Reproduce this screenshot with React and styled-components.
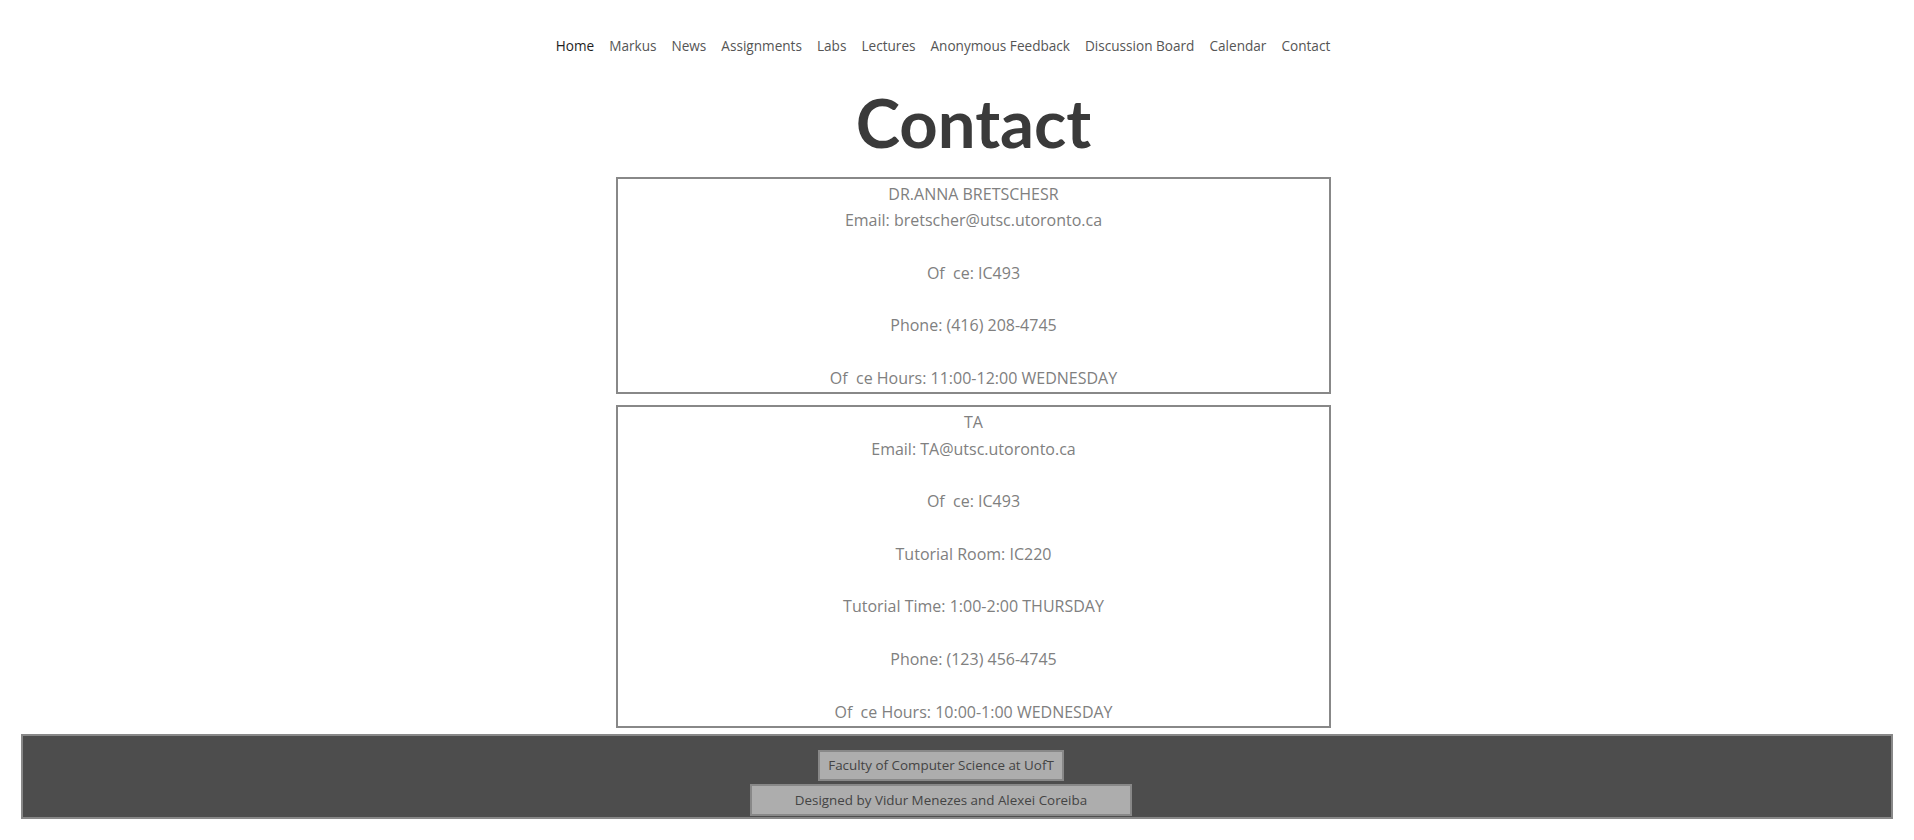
import React from 'react';
import styled, { createGlobalStyle } from 'styled-components';

const GlobalStyle = createGlobalStyle`
  html, body {
    margin: 0;
    padding: 0;
    background: #ffffff;
  }
  body {
    font-family: 'Open Sans', 'Liberation Sans', sans-serif;
  }
`;

const Page = styled.div`
  width: 100%;
  min-height: 840px;
  display: flex;
  flex-direction: column;
`;

const Nav = styled.nav`
  display: flex;
  justify-content: center;
  gap: 15px;
  padding: 36px 28px 0 0;
  line-height: 20px;
`;

const NavLink = styled.a`
  font-size: 13.6px;
  color: ${(props) => (props.$active ? '#1e1e1e' : '#555555')};
  text-decoration: none;
  cursor: pointer;
`;

const Main = styled.main`
  display: flex;
  flex-direction: column;
  align-items: center;
  padding: 0 0 6px 33px;
`;

const Title = styled.h1`
  margin: 26px 0 15px;
  font-family: Lato, 'Open Sans', sans-serif;
  font-size: 67px;
  line-height: 80px;
  font-weight: 700;
  color: #3a3a3a;
`;

const Card = styled.section`
  width: 711px;
  border: 2px solid #888888;
  padding: 2px 0 1px;
  text-align: center;
  color: #808080;
  font-size: 16px;
  line-height: 26.3px;

  & + & {
    margin-top: 11px;
  }
`;

const Line = styled.div`
  white-space: pre;
  min-height: 26.3px;
`;

const Footer = styled.footer`
  margin: 0 21px;
  background: #4d4d4d;
  border: 2px solid #888888;
  padding: 14px 32px 1px 0;
  display: flex;
  flex-direction: column;
  align-items: center;
  gap: 3px;
`;

const FooterButton = styled.div`
  background: #adadad;
  border: 2px solid #888888;
  color: #444444;
  font-size: 13.4px;
  line-height: ${(props) => props.$h}px;
  padding: 0 ${(props) => props.$px}px;
`;

const navItems = [
  'Home',
  'Markus',
  'News',
  'Assignments',
  'Labs',
  'Lectures',
  'Anonymous Feedback',
  'Discussion Board',
  'Calendar',
  'Contact',
];

const contacts = [
  [
    'DR.ANNA BRETSCHESR',
    'Email: bretscher@utsc.utoronto.ca',
    '',
    'Of  ce: IC493',
    '',
    'Phone: (416) 208-4745',
    '',
    'Of  ce Hours: 11:00-12:00 WEDNESDAY',
  ],
  [
    'TA',
    'Email: TA@utsc.utoronto.ca',
    '',
    'Of  ce: IC493',
    '',
    'Tutorial Room: IC220',
    '',
    'Tutorial Time: 1:00-2:00 THURSDAY',
    '',
    'Phone: (123) 456-4745',
    '',
    'Of  ce Hours: 10:00-1:00 WEDNESDAY',
  ],
];

export default function App() {
  return (
    <Page>
      <GlobalStyle />
      <Nav>
        {navItems.map((item) => (
          <NavLink key={item} $active={item === 'Home'}>
            {item}
          </NavLink>
        ))}
      </Nav>
      <Main>
        <Title>Contact</Title>
        {contacts.map((lines, i) => (
          <Card key={i}>
            {lines.map((text, j) => (
              <Line key={j}>{text}</Line>
            ))}
          </Card>
        ))}
      </Main>
      <Footer>
        <FooterButton $h={27} $px={8}>
          Faculty of Computer Science at UofT
        </FooterButton>
        <FooterButton $h={28} $px={43}>
          Designed by Vidur Menezes and Alexei Coreiba
        </FooterButton>
      </Footer>
    </Page>
  );
}
